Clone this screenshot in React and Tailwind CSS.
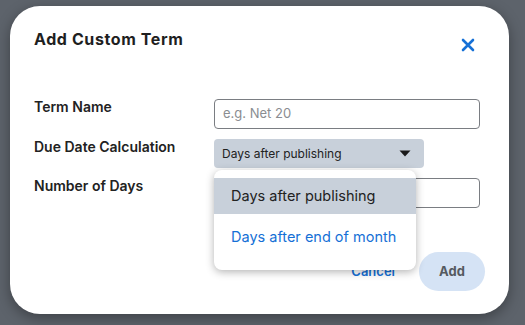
import React from "react";

export default function App() {
  return (
    <div className="w-[525px] h-[325px] bg-[#5d636b] pt-[6px] pl-[10px] overflow-hidden" style={{ fontFamily: "Inter, 'Noto Sans', sans-serif" }}>
      <div className="relative w-[499px] h-[308px] bg-white rounded-[30px] shadow-[0_4px_14px_rgba(0,0,0,0.35)] px-[24px]">
        <div className="flex justify-between items-start pt-[23px]">
          <div className="text-[16px] leading-[20px] font-bold text-[#1f1f1f] tracking-[0.6px]">Add Custom Term</div>
          <svg width="14" height="14" viewBox="0 0 14 14" className="mt-[9px] mr-[10px]">
            <path d="M2 2 L12 12 M12 2 L2 12" stroke="#1570d6" strokeWidth="2.6" strokeLinecap="round" />
          </svg>
        </div>

        <div className="mt-[47px] flex flex-col gap-[10px]">
          <div className="flex items-start">
            <div className="w-[180px] text-[14px] leading-[16px] font-semibold text-[#222]">Term Name</div>
            <div className="w-[266px] h-[30px] border border-[#7a7d82] rounded-[4px] flex items-center pl-[8px] text-[13px] text-[#8a8d91]">e.g. Net 20</div>
          </div>
          <div className="flex items-start">
            <div className="w-[180px] text-[14px] leading-[16px] font-semibold text-[#222]">Due Date Calculation</div>
            <div className="w-[210px] h-[29px] bg-[#c8d0da] rounded-[4px] flex items-center justify-between pl-[8px] pr-[13px] text-[12px] text-[#222]">
              <span>Days after publishing</span>
              <svg width="12" height="7" viewBox="0 0 12 7">
                <path d="M0.5 0.5 L11.5 0.5 L6 6.5 Z" fill="#1a1a1a" />
              </svg>
            </div>
          </div>
          <div className="flex items-start">
            <div className="w-[180px] text-[14px] leading-[16px] font-semibold text-[#222]">Number of Days</div>
            <div className="w-[266px] h-[30px] border border-[#7a7d82] rounded-[4px]"></div>
          </div>
        </div>

        <div className="mt-[44px] flex justify-end items-center gap-[24px] pr-[0px]">
          <span className="text-[13px] font-semibold text-[#1570d6]">Cancel</span>
          <div className="w-[66px] h-[39px] rounded-full bg-[#d5e3f5] flex items-center justify-center text-[13px] font-bold text-[#555a60]">Add</div>
        </div>

        <div className="absolute left-[204px] top-[164px] w-[202px] h-[100px] bg-white rounded-[8px] shadow-[0_2px_8px_rgba(0,0,0,0.3)] pt-[8px]">
          <div className="h-[36px] bg-[#c8d0da] flex items-center pl-[17px] text-[14.5px] text-[#222]">Days after publishing</div>
          <div className="h-[46px] flex items-center pl-[17px] text-[14.5px] text-[#1570d6]">Days after end of month</div>
        </div>
      </div>
    </div>
  );
}
